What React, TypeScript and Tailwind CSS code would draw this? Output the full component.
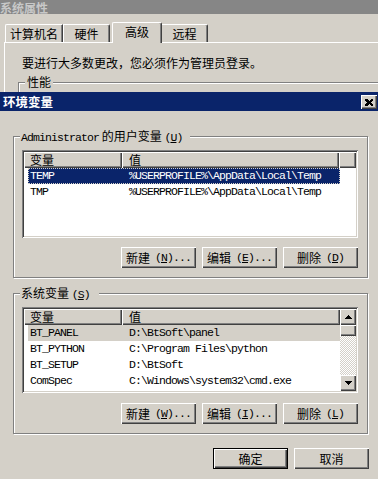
import type { ReactNode } from 'react';

const FACE = 'bg-[#d4d0c8]';
const RAISED = 'shadow-[inset_1px_1px_#fff,inset_-1px_-1px_#404040,inset_-2px_-2px_#808080]';
const SUNKEN = 'shadow-[inset_1px_1px_#808080,inset_-1px_-1px_#fff,inset_2px_2px_#404040,inset_-2px_-2px_#d4d0c8]';
const CJK = "font-['Noto_Sans_CJK_SC',sans-serif]";
const MONO = "font-['Liberation_Mono','Noto_Sans_CJK_SC',monospace] text-[11.5px] tracking-[-0.9px]";

type Row = { name: string; value: string; state?: 'focus' | 'dim' };

const userVars: Row[] = [
  { name: 'TEMP', value: '%USERPROFILE%\\AppData\\Local\\Temp', state: 'focus' },
  { name: 'TMP', value: '%USERPROFILE%\\AppData\\Local\\Temp' },
];

const sysVars: Row[] = [
  { name: 'BT_PANEL', value: 'D:\\BtSoft\\panel', state: 'dim' },
  { name: 'BT_PYTHON', value: 'C:\\Program Files\\python' },
  { name: 'BT_SETUP', value: 'D:\\BtSoft' },
  { name: 'ComSpec', value: 'C:\\Windows\\system32\\cmd.exe' },
];

const Btn = ({ children, isDefault }: { children: ReactNode; isDefault?: boolean }) => (
  <div
    className={`flex h-[21px] w-[75px] items-center justify-center ${FACE} ${RAISED} ${CJK} text-[12px] leading-[12px] ${
      isDefault ? 'border border-black' : ''
    }`}
  >
    {children}
  </div>
);

const Hot = ({ k, dots }: { k: string; dots?: boolean }) => (
  <span className={`${MONO} ml-[5px]`}>
    (<u>{k}</u>){dots ? '...' : ''}
  </span>
);

const Arrow = ({ down }: { down?: boolean }) => (
  <svg width="7" height="4" shapeRendering="crispEdges" className={down ? 'rotate-180' : ''}>
    <rect x="3" y="0" width="1" height="1" fill="#000" />
    <rect x="2" y="1" width="3" height="1" fill="#000" />
    <rect x="1" y="2" width="5" height="1" fill="#000" />
    <rect x="0" y="3" width="7" height="1" fill="#000" />
  </svg>
);

const Header = ({ filler }: { filler?: boolean }) => (
  <div className={`flex h-[16px] shrink-0 ${CJK} text-[12px] leading-[12px]`}>
    <div className={`flex w-[98px] items-center pl-[6px] ${FACE} ${RAISED}`}>变量</div>
    <div className={`flex items-center pl-[7px] ${FACE} ${RAISED} ${filler ? 'w-[217px]' : 'flex-1'}`}>值</div>
    {filler && <div className={`flex-1 ${FACE} ${RAISED}`} />}
  </div>
);

const VarRow = ({ row }: { row: Row }) => (
  <div
    className={`ml-[4px] flex h-[16px] w-[312px] shrink-0 items-center pl-[2px] ${MONO} ${
      row.state === 'focus'
        ? 'bg-[#0a246a] text-white outline-1 outline-dotted outline-[#d4d0c8] -outline-offset-1'
        : row.state === 'dim'
          ? 'bg-[#d4d0c8]'
          : ''
    }`}
  >
    <span className="w-[99px] shrink-0">{row.name}</span>
    <span>{row.value}</span>
  </div>
);

const Group = ({ label, children }: { label: ReactNode; children: ReactNode }) => (
  <div className="relative w-[355px] border border-[#808080] pt-[13px] pr-[9px] pb-[9px] pl-[8px] shadow-[inset_1px_1px_#fff,1px_1px_#fff]">
    <div className={`absolute -top-[7px] left-[6px] flex items-center pl-[1px] ${FACE} leading-[12px]`}>{label}</div>
    {children}
  </div>
);

const Buttons = ({ keys }: { keys: [string, string, string] }) => (
  <div className="flex justify-end gap-[6px]">
    <Btn>
      新建<Hot k={keys[0]} dots />
    </Btn>
    <Btn>
      编辑<Hot k={keys[1]} dots />
    </Btn>
    <Btn>
      删除<Hot k={keys[2]} />
    </Btn>
  </div>
);

export default function App() {
  return (
    <div className={`h-[479px] w-[378px] overflow-hidden ${FACE} text-black ${CJK}`}>
      {/* 系统属性 (behind) */}
      <div className="h-[92px] overflow-hidden">
        <div className="flex h-[14px] items-center overflow-hidden bg-[#868686]">
          <div className="text-[12px] leading-[13px] font-bold text-[#c8c8c8]">系统属性</div>
        </div>
        <div className="mt-[8px] flex h-[20px] items-end pl-[5px] text-[12px] leading-[12px]">
          <div className="flex h-[18px] w-[58px] items-center justify-center rounded-tl-[2px] border-t border-l border-white border-r border-r-[#404040] shadow-[inset_-1px_0_#808080]">
            计算机名
          </div>
          <div className="flex h-[18px] w-[47px] items-center justify-center rounded-tr-[2px] border-t border-l border-white border-r border-r-[#404040] shadow-[inset_-1px_0_#808080]">
            硬件
          </div>
          <div className={`relative z-10 -mb-[1px] ml-[2px] flex h-[21px] w-[50px] items-start justify-center rounded-t-[2px] border-t border-l border-white border-r border-r-[#404040] pt-[3px] ${FACE} shadow-[inset_-1px_0_#808080]`}>
            高级
          </div>
          <div className="flex h-[18px] w-[46px] items-center justify-center rounded-tr-[2px] border-t border-white border-r border-r-[#404040] shadow-[inset_-1px_0_#808080]">
            远程
          </div>
        </div>
        <div className="ml-[4px] h-[50px] border-t border-l border-white">
          <div className="pt-[14px] pl-[17px] text-[12px] leading-[12px]">要进行大多数更改，您必须作为管理员登录。</div>
          <div className="relative mt-[13px] ml-[13px] h-[20px] border-t border-l border-[#808080] shadow-[inset_1px_1px_#fff]">
            <div className={`absolute -top-[7px] left-[6px] px-[2px] text-[12px] leading-[12px] ${FACE}`}>性能</div>
          </div>
        </div>
      </div>

      {/* 环境变量 dialog */}
      <div className="flex h-[19px] items-start justify-between bg-[#0a246a] pt-[3px] pr-[1px]">
        <div className="pl-[3px] text-[12.5px] leading-[13px] font-bold text-white">环境变量</div>
        <div className={`flex h-[14px] w-[16px] items-center justify-center ${FACE} ${RAISED}`}>
          <svg width="8" height="7" shapeRendering="crispEdges">
            <path d="M0 0h2l2 2 2-2h2v1l-2 2.5 2 2.5v1h-2l-2-2-2 2h-2v-1l2-2.5-2-2.5z" fill="#000" />
          </svg>
        </div>
      </div>

      <div className="pl-[13px]">
        <div className="mt-[25px]">
          <Group
            label={
              <span className="pr-[8px] text-[12px]">
                <span className={MONO}>Administrator</span> 的用户变量 <span className={MONO}>(<u>U</u>)</span>
              </span>
            }
          >
            <div className={`h-[88px] w-[336px] bg-white p-[2px] ${SUNKEN}`}>
              <div className="flex h-full flex-col overflow-hidden">
                <Header filler />
                {userVars.map((r) => (
                  <VarRow key={r.name} row={r} />
                ))}
              </div>
            </div>
            <div className="mt-[9px]">
              <Buttons keys={['N', 'E', 'D']} />
            </div>
          </Group>
        </div>

        <div className="mt-[15px]">
          <Group
            label={
              <span className="pr-[9px] text-[12px]">
                系统变量 <span className={MONO}>(<u>S</u>)</span>
              </span>
            }
          >
            <div className={`h-[86px] w-[336px] bg-white p-[2px] ${SUNKEN}`}>
              <div className="flex h-full overflow-hidden">
                <div className="flex flex-1 flex-col">
                  <Header />
                  {sysVars.map((r) => (
                    <VarRow key={r.name} row={r} />
                  ))}
                </div>
                <div className="flex w-[16px] flex-col">
                  <div className={`flex h-[16px] items-center justify-center ${FACE} ${RAISED}`}>
                    <Arrow />
                  </div>
                  <div className={`h-[11px] ${FACE} ${RAISED}`} />
                  <div className="flex-1 bg-[image:repeating-conic-gradient(#d4d0c8_0_25%,#fff_0_50%)] bg-[length:2px_2px]" />
                  <div className={`flex h-[16px] items-center justify-center ${FACE} ${RAISED}`}>
                    <Arrow down />
                  </div>
                </div>
              </div>
            </div>
            <div className="mt-[10px]">
              <Buttons keys={['W', 'I', 'L']} />
            </div>
          </Group>
        </div>
      </div>

      <div className="mt-[14px] flex justify-end gap-[6px] pr-[9px]">
        <Btn isDefault>确定</Btn>
        <Btn>取消</Btn>
      </div>
    </div>
  );
}
